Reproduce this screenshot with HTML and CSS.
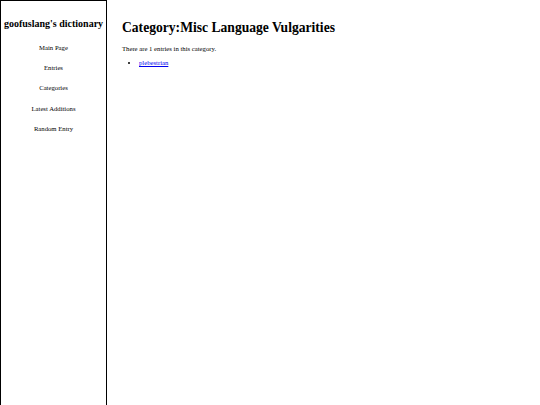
FILE: index.html
```html
<!DOCTYPE html>
<html>
<head>
<meta charset="utf-8">
<link rel="stylesheet" href="styles.css">
</head>
<body>
<div class="sidebar">
  <h2 class="site-title">goofuslang's dictionary</h2>
  <nav class="nav">
    <a class="nav-item">Main Page</a>
    <a class="nav-item">Entries</a>
    <a class="nav-item">Categories</a>
    <a class="nav-item">Latest Additions</a>
    <a class="nav-item">Random Entry</a>
  </nav>
</div>
<div class="content">
  <h1 class="page-title">Category:Misc Language Vulgarities</h1>
  <p class="count">There are 1 entries in this category.</p>
  <ul class="entries">
    <li><a href="#" class="entry-link">plebestrian</a></li>
  </ul>
</div>
</body>
</html>
```

FILE: styles.css
```css
html, body {
  margin: 0;
  padding: 0;
  background: #fff;
}
body {
  display: flex;
  font-family: "Liberation Serif", "Times New Roman", serif;
  font-size: 6.7px;
  color: #000;
  min-height: 405px;
}
.sidebar {
  width: 105px;
  min-height: 420px;
  border: 1px solid #000;
  border-bottom: none;
  flex-shrink: 0;
  text-align: center;
}
.site-title {
  font-size: 10px;
  font-weight: bold;
  margin: 17px 0 0 0;
  line-height: 12px;
}
.nav {
  display: flex;
  flex-direction: column;
  align-items: center;
  margin-top: 14px;
  gap: 12.2px;
}
.nav-item {
  line-height: 8px;
  display: block;
}
.content {
  padding-left: 15px;
}
.page-title {
  font-size: 13.6px;
  font-weight: bold;
  margin: 20px 0 0 0;
  line-height: 16px;
}
.count {
  margin: 9px 0 0 0;
  line-height: 8px;
}
.entries {
  margin: 6px 0 0 0;
  padding-left: 17px;
  line-height: 8px;
}
.entry-link {
  color: #0000ee;
}
```
